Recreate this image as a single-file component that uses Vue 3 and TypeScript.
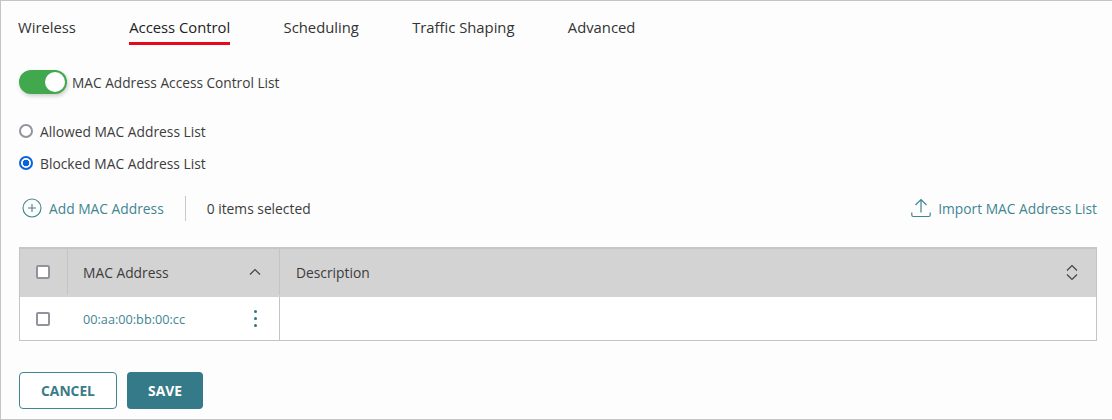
<template>
  <div class="panel">
    <nav class="tabs">
      <a
        v-for="tab in tabs"
        :key="tab"
        class="tab"
        :class="{ active: tab === activeTab }"
      >{{ tab }}</a>
    </nav>

    <div class="toggle-row">
      <span class="toggle"><span class="knob"></span></span>
      <span>MAC Address Access Control List</span>
    </div>

    <div class="radio-row">
      <span class="radio"></span>
      <span>Allowed MAC Address List</span>
    </div>
    <div class="radio-row second">
      <span class="radio checked"></span>
      <span>Blocked MAC Address List</span>
    </div>

    <div class="toolbar">
      <a class="link add">
        <svg width="20" height="20" viewBox="0 0 20 20" fill="none" stroke="#3f8592" stroke-width="1.1">
          <circle cx="10" cy="10" r="9" />
          <path d="M10 6v8M6 10h8" />
        </svg>
        Add MAC Address
      </a>
      <span class="divider"></span>
      <span class="selected">0 items selected</span>
      <a class="link import">
        <svg width="20" height="20" viewBox="0 0 20 20" fill="none" stroke="#3f8592" stroke-width="1.2">
          <path d="M10 14.5V1.5M4.5 7 10 1.5 15.5 7" />
          <path d="M.8 14.5V17q0 1.500 1.500 1.500h15.400q1.500 0 1.500-1.500v-2.500" />
        </svg>
        Import MAC Address List
      </a>
    </div>

    <div class="table">
      <div class="row head">
        <div class="cell check"><span class="box"></span></div>
        <div class="cell mac">
          MAC Address
          <svg width="12" height="8" viewBox="0 0 12 8" fill="none" stroke="#444" stroke-width="1.2">
            <path d="M1 6.5 6 1.5l5 5" />
          </svg>
        </div>
        <div class="cell desc">
          Description
          <svg width="14" height="17" viewBox="0 0 14 17" fill="none" stroke="#444" stroke-width="1.2">
            <path d="M2 6.500 7 1.500l5 5M2 10.500l5 5 5-5" />
          </svg>
        </div>
      </div>
      <div v-for="item in items" :key="item" class="row body">
        <div class="cell check"><span class="box"></span></div>
        <div class="cell mac">
          <a class="mac-link">{{ item }}</a>
          <span class="dots"><i></i><i></i><i></i></span>
        </div>
        <div class="cell desc"></div>
      </div>
    </div>

    <div class="actions">
      <button class="btn cancel">CANCEL</button>
      <button class="btn save">SAVE</button>
    </div>
  </div>
</template>

<script setup lang="ts">
const tabs: string[] = ['Wireless', 'Access Control', 'Scheduling', 'Traffic Shaping', 'Advanced']
const activeTab = 'Access Control'
const items: string[] = ['00:aa:00:bb:00:cc']
</script>

<style>
body {
  background: #fff;
}
</style>

<style scoped>
.panel {
  box-sizing: border-box;
  width: 1112px;
  height: 420px;
  padding: 0 15px 0 18px;
  background: #fdfdfd;
  border: 1px solid #c4c4c4;
  border-right: none;
  font-family: "Open Sans", sans-serif;
  font-size: 13.8px;
  color: #3c3c3c;
}

.tabs {
  display: flex;
  gap: 53.3px;
  height: 44px;
  margin-left: -1px;
}

.tab {
  box-sizing: border-box;
  height: 44px;
  padding-top: 16px;
  font-size: 14.8px;
  line-height: 20px;
  color: #333;
}

.tab.active {
  color: #222;
  border-bottom: 3px solid #e8081c;
}

.toggle-row {
  display: flex;
  align-items: center;
  gap: 5px;
  height: 24px;
  margin-top: 25px;
  font-size: 13.7px;
}

.toggle {
  box-sizing: border-box;
  display: flex;
  justify-content: flex-end;
  align-items: center;
  width: 48px;
  height: 24px;
  padding-right: 2px;
  border-radius: 12px;
  background: #41a84e;
  box-shadow: 1px 2px 4px rgba(0, 0, 0, 0.2);
}

.knob {
  width: 20px;
  height: 20px;
  border-radius: 50%;
  background: #fff;
}

.radio-row {
  display: flex;
  align-items: center;
  gap: 7px;
  height: 20px;
  margin-top: 27px;
}

.radio-row.second {
  margin-top: 12px;
}

.radio {
  box-sizing: border-box;
  width: 14px;
  height: 14px;
  border-radius: 50%;
  border: 2px solid #94929e;
  background: #fff;
}

.radio.checked {
  border: 2px solid #0b63db;
  background: radial-gradient(circle, #0b63db 0 3px, #fff 3.6px);
}

.toolbar {
  display: flex;
  align-items: center;
  height: 26px;
  margin-top: 22px;
}

.link {
  display: flex;
  align-items: center;
  color: #3f8592;
}

.add {
  gap: 7px;
  margin-left: 3px;
}

.divider {
  width: 1px;
  height: 25px;
  margin: 0 21px;
  background: #c9c9c9;
}

.import {
  gap: 7px;
  margin-left: auto;
}

.table {
  margin-top: 26px;
  border: 1px solid #c4c4c4;
  border-top: none;
}

.row {
  display: flex;
}

.head {
  height: 50px;
  padding-bottom: 2px;
  background: #d3d3d3;
  border-top: 2px solid #c6c6c6;
  box-sizing: border-box;
}

.body {
  height: 43px;
  background: #fff;
}

.cell {
  box-sizing: border-box;
  display: flex;
  align-items: center;
  padding-left: 16px;
}

.check {
  width: 48px;
  padding-left: 16px;
}

.head .check {
  border-right: 1px solid #c4c4c4;
}

.mac {
  justify-content: space-between;
  width: 212px;
  padding-left: 15px;
  padding-right: 18px;
  border-right: 1px solid #c4c4c4;
}

.desc {
  flex: 1;
  justify-content: space-between;
  padding-right: 17px;
}

.box {
  box-sizing: border-box;
  width: 14px;
  height: 14px;
  border: 2px solid #94929e;
  border-radius: 2px;
  background: #fff;
}

.mac-link {
  font-size: 12.7px;
  color: #3f8592;
}

.dots {
  display: flex;
  flex-direction: column;
  gap: 3.5px;
  margin-right: 4px;
}

.dots i {
  width: 3.5px;
  height: 3.5px;
  border-radius: 50%;
  background: #2f7482;
}

.actions {
  display: flex;
  gap: 10px;
  margin-top: 31px;
}

.btn {
  box-sizing: border-box;
  height: 37px;
  border-radius: 4px;
  font-family: inherit;
  font-size: 13.8px;
  font-weight: 700;
  line-height: 1;
}

.cancel {
  width: 98px;
  border: 1px solid #3f8592;
  background: #fff;
  color: #3a7b88;
}

.save {
  width: 76px;
  border: none;
  background: #357a88;
  color: #fff;
}
</style>
